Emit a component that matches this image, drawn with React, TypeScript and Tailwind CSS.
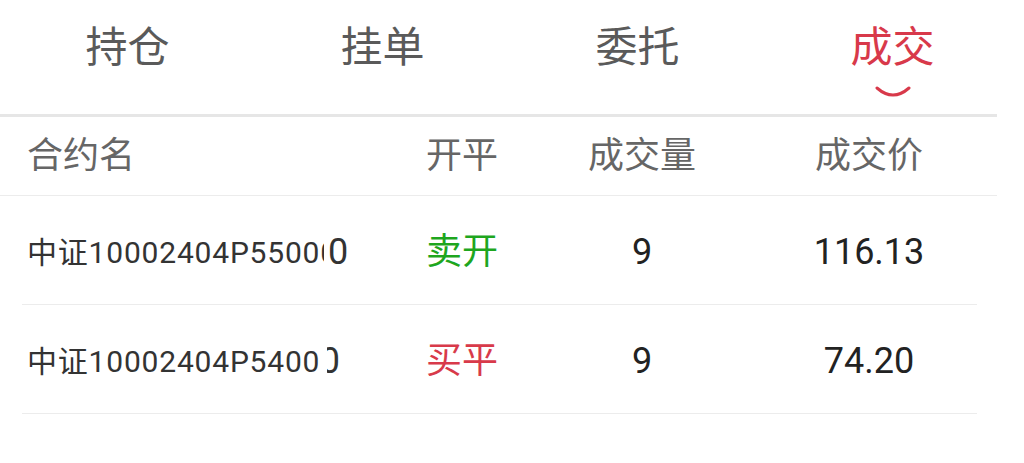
const font = "font-['Roboto','Noto_Sans_CJK_SC',sans-serif]";

const tabs = ["持仓", "挂单", "委托", "成交"];

const rows = [
  { name: "中证10002404P55000", side: "卖开", sideClass: "text-[#1ea61e]", qty: "9", price: "116.13", tail: "full" },
  { name: "中证10002404P5400", side: "买平", sideClass: "text-[#d83a4a]", qty: "9", price: "74.20", tail: "half" },
];

export default function App() {
  return (
    <div className={`h-[463px] w-[1024px] overflow-hidden bg-white ${font}`}>
      <div className="grid h-[114px] w-[1024px] grid-cols-4 pr-[4px]">
        {tabs.map((tab, i) => {
          const active = i === tabs.length - 1;
          return (
            <div key={tab} className="flex flex-col items-center pt-[19px]">
              <span className={`text-[42px] leading-[58px] ${active ? "text-[#d8394a]" : "text-[#5a5a5a]"}`}>{tab}</span>
              {active && (
                <svg width="36" height="12" viewBox="0 0 36 12" className="mt-[9px]">
                  <path d="M2 2 Q18 16 34 2" fill="none" stroke="#d8394a" strokeWidth="3" strokeLinecap="round" />
                </svg>
              )}
            </div>
          );
        })}
      </div>
      <div className="w-[997px]">
        <div className="h-[3px] bg-[#e6e6e6]" />

        <div className="grid h-[79px] grid-cols-[392px_140px_220px_234px] items-center border-b border-[#ececec] text-[36px] text-[#666]">
          <span className="pl-[27px]">合约名</span>
          <span className="text-center">开平</span>
          <span className="text-center">成交量</span>
          <span className="text-center">成交价</span>
        </div>

        <div className="pl-[22px] pr-[20px]">
          {rows.map((row) => (
            <div key={row.name} className="grid h-[109px] grid-cols-[370px_140px_220px_234px] items-center border-b border-[#ececec] pt-[4px] text-[#222]">
              <div className="flex items-center pl-[5px] text-[#333]">
                {row.tail === "full" ? (
                  <>
                    <div className="w-[297px] overflow-hidden whitespace-nowrap text-[30px] tracking-[0.8px]">{row.name}</div>
                    <span className="ml-[4px] text-[36px]">0</span>
                  </>
                ) : (
                  <>
                    <div className="w-[297px] overflow-hidden whitespace-nowrap text-[30px] tracking-[0.8px]">{row.name}</div>
                    <div className="ml-[3px] flex w-[13px] justify-end overflow-hidden">
                      <span className="text-[36px]">0</span>
                    </div>
                  </>
                )}
              </div>
              <span className={`text-center text-[36px] ${row.sideClass}`}>{row.side}</span>
              <span className="text-center text-[36px]">{row.qty}</span>
              <span className="text-center text-[36px]">{row.price}</span>
            </div>
          ))}
        </div>
      </div>
    </div>
  );
}
